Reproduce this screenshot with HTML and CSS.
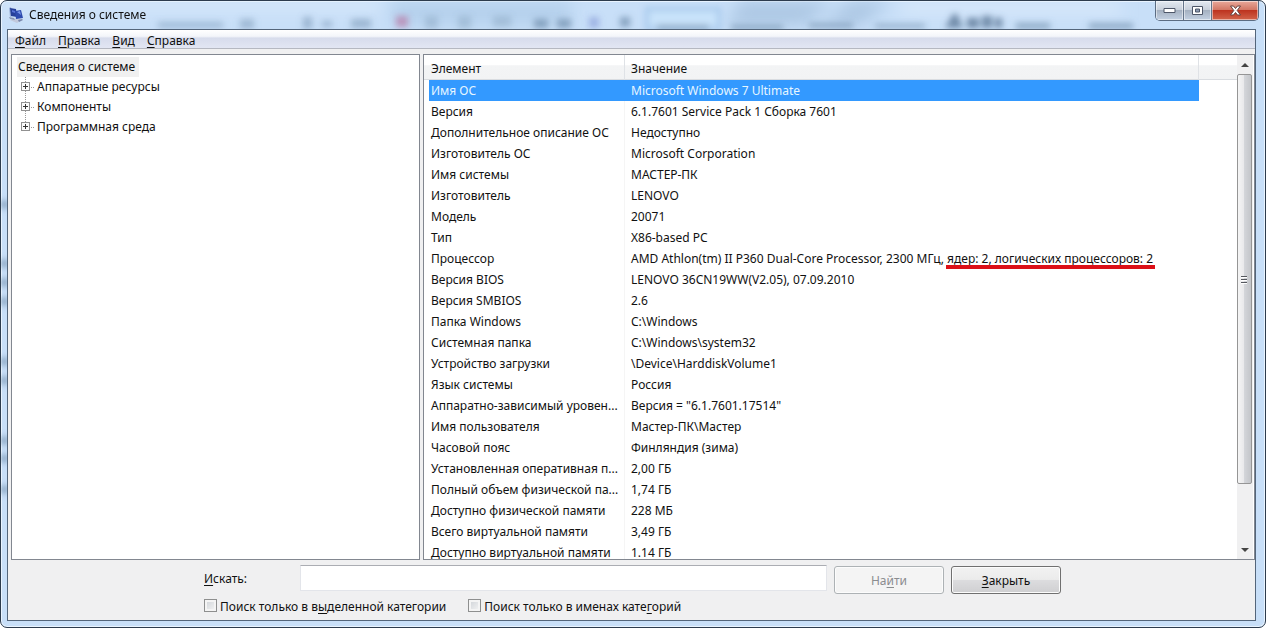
FILE: index.html
```html
<!DOCTYPE html>
<html lang="ru">
<head>
<meta charset="utf-8">
<title>Сведения о системе</title>
<link rel="stylesheet" href="styles.css">
</head>
<body>
<main class="window">
  <svg class="glass" width="100%" height="100%" aria-hidden="true">
    <defs>
      <filter id="soft" x="-20%" y="-100%" width="140%" height="300%"><feGaussianBlur stdDeviation="3"/></filter>
      <filter id="wide" x="-20%" y="-100%" width="140%" height="300%"><feGaussianBlur stdDeviation="8"/></filter>
    </defs>
    <g filter="url(#wide)">
      <path d="M390 0h180v24H390z" fill="#a9c6e4" opacity=".6"/>
      <path d="M740 0h90l-25 24h-80z M850 0h40l-30 24h-40z" fill="#98b4d4" opacity=".55"/>
      <path d="M0 0h380v8H0z M900 2h220v10H900z" fill="#dcebfb"/>
    </g>
    <g filter="url(#soft)" fill="#7895b3">
      <path d="M157 21h65v6h-65z M239 18h14v10h-14z" opacity=".5"/>
      <path d="M302 16h9v12h-9z M321 20h10v6h-10z M350 18h20v9h-20z" opacity=".55"/>
      <path d="M395 15h12v11h-12z" fill="#b86a9a" opacity=".6"/>
      <path d="M424 15h13v13h-13z M457 15h13v13h-13z M492 15h18v11h-18z" opacity=".35"/>
      <path d="M533 18h14v9h-14z M556 18h14v9h-14z M619 16h10v10h-10z" opacity=".8"/>
      <path d="M588 16h10v11h-10z" fill="#7589cf" opacity=".5"/>
      <path d="M646 8h72v20h-72z" fill="#c9e4fb" stroke="#9fc4ea" stroke-width="4" opacity=".8"/>
      <path d="M656 24h52v5h-52z M730 24h52v5h-52z M808 22h44v5h-44z M874 23h50v4h-50z M1015 22h34v6h-34z M1088 22h44v6h-44z" opacity=".75"/>
      <path d="M944 27l8-14h4l6 14z M966 17h12v10h-12z M981 15h10v12h-10z M994 17h7v10h-7z" fill="#607c9b" opacity=".85"/>
      <path d="M0 200h7v7H0z M0 259h7v7H0z M0 278h7v7H0z M0 297h7v7H0z M0 357h7v7H0z M0 376h7v7H0z M0 436h7v7H0z M0 454h7v7H0z M0 485h7v7H0z"/>
    </g>
  </svg>
  <header class="titlebar">
    <svg class="app-icon" width="16" height="16" viewBox="0 0 16 16" aria-hidden="true">
      <path d="M2 13l7-2 5 2-5 3z" fill="#c2c9dc"/>
      <path d="M1 1l2-1 1 9-2 1z" fill="#9bb1d8"/>
      <path d="M2 1l6 1 1 8-6-1z" fill="#253f99"/>
      <path d="M4 3l3 1v2L4 5z" fill="#5773d6"/>
      <path d="M7 4l6-1 2 8-7 1z" fill="#2d4aae"/>
      <path d="M9 5l3-1 1 4z" fill="#7896e8"/>
      <path d="M1 10l5 1 1 2-5-1z" fill="#8997b5"/>
      <path d="M10 13l4-1 1 1-4 2z" fill="#7886ab"/>
    </svg>
    <h1 class="title">Сведения о системе</h1>
    <div class="caption-buttons">
      <button class="caption" aria-label="Свернуть"><svg width="13" height="7" viewBox="0 0 13 7"><path d="M1 1.5h11v4H1z" fill="#fff" stroke="#4d5668"/></svg></button>
      <button class="caption" aria-label="Развернуть"><svg width="13" height="11" viewBox="0 0 13 11"><path d="M1.500 1.500h10v8h-10z" fill="#fff" stroke="#4d5668"/><path d="M4.500 4h4v3h-4z" fill="#8d9cb3" stroke="#4d5668"/></svg></button>
      <button class="caption close" aria-label="Закрыть окно"><svg width="13" height="11" viewBox="0 0 13 11"><path d="M1.500 1h3l2 2.500 2-2.500h3l-3.300 4.500 3.300 4.500h-3l-2-2.500-2 2.500h-3l3.300-4.500z" fill="#fff" stroke="#63413f"/></svg></button>
    </div>
  </header>
  <div class="client">
    <nav class="menubar">
      <button class="menu"><u>Ф</u>айл</button>
      <button class="menu"><u>П</u>равка</button>
      <button class="menu"><u>В</u>ид</button>
      <button class="menu"><u>С</u>правка</button>
    </nav>
    <div class="panes">
      <section class="pane tree-pane">
        <div class="tree-root">Сведения о системе</div>
        <ul class="tree">
          <li><button class="expander" aria-label="Развернуть: Аппаратные ресурсы"></button><span>Аппаратные ресурсы</span></li>
          <li><button class="expander" aria-label="Развернуть: Компоненты"></button><span>Компоненты</span></li>
          <li><button class="expander" aria-label="Развернуть: Программная среда"></button><span>Программная среда</span></li>
        </ul>
      </section>
      <section class="pane list-pane">
        <div class="list">
          <table class="details">
            <colgroup><col class="col-name"><col><col class="col-rest"></colgroup>
            <thead><tr><th>Элемент</th><th>Значение</th><td></td></tr></thead>
            <tbody>
              <tr class="selected"><td>Имя ОС</td><td>Microsoft Windows 7 Ultimate</td></tr>
              <tr><td>Версия</td><td>6.1.7601 Service Pack 1 Сборка 7601</td></tr>
              <tr><td>Дополнительное описание ОС</td><td>Недоступно</td></tr>
              <tr><td>Изготовитель ОС</td><td>Microsoft Corporation</td></tr>
              <tr><td>Имя системы</td><td>МАСТЕР-ПК</td></tr>
              <tr><td>Изготовитель</td><td>LENOVO</td></tr>
              <tr><td>Модель</td><td>20071</td></tr>
              <tr><td>Тип</td><td>X86-based PC</td></tr>
              <tr><td>Процессор</td><td>AMD Athlon(tm) II P360 Dual-Core Processor, 2300 МГц, <span class="marked">ядер: 2, логических процессоров: 2</span></td></tr>
              <tr><td>Версия BIOS</td><td>LENOVO 36CN19WW(V2.05), 07.09.2010</td></tr>
              <tr><td>Версия SMBIOS</td><td>2.6</td></tr>
              <tr><td>Папка Windows</td><td>C:\Windows</td></tr>
              <tr><td>Системная папка</td><td>C:\Windows\system32</td></tr>
              <tr><td>Устройство загрузки</td><td>\Device\HarddiskVolume1</td></tr>
              <tr><td>Язык системы</td><td>Россия</td></tr>
              <tr><td>Аппаратно-зависимый уровен...</td><td>Версия = "6.1.7601.17514"</td></tr>
              <tr><td>Имя пользователя</td><td>Мастер-ПК\Мастер</td></tr>
              <tr><td>Часовой пояс</td><td>Финляндия (зима)</td></tr>
              <tr><td>Установленная оперативная п...</td><td>2,00 ГБ</td></tr>
              <tr><td>Полный объем физической па...</td><td>1,74 ГБ</td></tr>
              <tr><td>Доступно физической памяти</td><td>228 МБ</td></tr>
              <tr><td>Всего виртуальной памяти</td><td>3,49 ГБ</td></tr>
              <tr><td>Доступно виртуальной памяти</td><td>1.14 ГБ</td></tr>
            </tbody>
          </table>
        </div>
        <div class="scrollbar">
          <button class="arrow" aria-label="Вверх"><svg width="8" height="4" viewBox="0 0 8 4"><path d="M0 4l4-4 4 4z" fill="#444"/></svg></button>
          <div class="track"><div class="thumb"><svg width="7" height="9" viewBox="0 0 7 9"><path d="M0 1.500h6M0 4.500h6M0 7.500h6" stroke="#55585e"/><path d="M0 2.500h6M0 5.500h6M0 8.500h6" stroke="#fff"/></svg></div></div>
          <button class="arrow" aria-label="Вниз"><svg width="8" height="4" viewBox="0 0 8 4"><path d="M0 0h8l-4 4z" fill="#444"/></svg></button>
        </div>
      </section>
    </div>
    <form class="search">
      <div class="search-row">
        <label class="search-label" for="query"><u>И</u>скать:</label>
        <input class="query" id="query" type="text">
        <button class="button" type="button" disabled>На<u>й</u>ти</button>
        <button class="button" type="button"><u>З</u>акрыть</button>
      </div>
      <div class="options">
        <label class="option"><input type="checkbox"><span>Поиск только в в<u>ы</u>деленной категории</span></label>
        <label class="option"><input type="checkbox"><span>Поиск только в именах кате<u>г</u>орий</span></label>
      </div>
    </form>
  </div>
</main>
</body>
</html>
```

FILE: styles.css
```css
* { box-sizing: border-box; }

body {
  margin: 0;
  background: #fff;
  color: #111;
  font: 12px/20px "Noto Sans", "Open Sans", sans-serif;
}

button, input { font: inherit; color: inherit; }
button { padding: 0; border: 0; background: none; }
u { text-underline-offset: 2px; text-decoration-skip-ink: none; }

.window {
  position: relative;
  display: flex;
  flex-direction: column;
  height: 100vh;
  padding: 1px 10px 6px 6px;
  overflow: hidden;
  border: 1px solid #2c3b4d;
  border-radius: 7px;
  background: #c8dff8;
  box-shadow: inset 0 0 0 1px #e9f4ff;
}

.glass { position: absolute; top: 0; left: 0; }

.titlebar {
  position: relative;
  display: flex;
  align-items: flex-start;
  height: 27px;
  flex: none;
}

.app-icon { margin: 5px 5px 0 1px; }

.title {
  flex: 1;
  margin: 3px 0 0;
  font-size: 12px;
  font-weight: 400;
  line-height: 20px;
}

.caption-buttons {
  display: flex;
  height: 20px;
  margin: -1px -4px 0 0;
  overflow: hidden;
  border: 1px solid #5b6c82;
  border-top: 0;
  border-radius: 0 0 5px 5px;
}

.caption {
  display: flex;
  align-items: center;
  justify-content: center;
  width: 28px;
  border-right: 1px solid #65758a;
  background: linear-gradient(#e3e9f1, #c9d1dc 45%, #a5b1c1 50%, #c3d1e2);
  box-shadow: inset 0 0 0 1px #ffffff80;
}

.caption.close {
  width: 46px;
  border-right: 0;
  background: linear-gradient(#e9a99b, #d37866 45%, #bd3420 50%, #d2644b);
}

.client {
  position: relative;
  display: flex;
  flex-direction: column;
  flex: 1;
  min-height: 0;
  margin-right: -1px;
  border: 1px solid #53657a;
  background: #f0f0f1;
}

.menubar {
  display: flex;
  gap: 12px;
  height: 19px;
  flex: none;
  padding-left: 7px;
  border-bottom: 1px solid #b5b8c1;
  background: linear-gradient(#fff, #f3f5fa 35%, #d7dcec 45%, #e2e6f3);
}

.menu { height: 20px; line-height: 20px; padding-top: 1px; }

.panes {
  display: flex;
  flex: 1;
  gap: 3px;
  min-height: 0;
  padding: 5px 0 0 3px;
}

.pane {
  border: 1px solid #828790;
  background: #fff;
  overflow: hidden;
}

.tree-pane { flex: 0 0 409px; padding: 2px 5px; }
.tree-root { width: max-content; padding: 0 4px 0 1px; background: #f0f0f0; }
.tree { margin: 0; padding: 0 0 0 4px; list-style: none; }

.tree li {
  display: flex;
  align-items: center;
  height: 20px;
  background: repeating-linear-gradient(#999 0 1px, #fff 1px 2px) 4px 0 / 1px 100% no-repeat;
}

.tree li:last-child { background-size: 1px 10px; }

.tree li::before {
  content: "";
  order: 1;
  width: 3px;
  margin: 0 3px 0 1px;
  border-top: 1px dotted #999;
}

.tree span { order: 2; }

.expander {
  width: 9px;
  height: 9px;
  margin-bottom: 1px;
  border: 1px solid #919191;
  background:
    linear-gradient(#333, #333) center / 5px 1px no-repeat,
    linear-gradient(#333, #333) center / 1px 5px no-repeat,
    #fafafa;
}

.list-pane { display: flex; flex: 1; min-width: 0; }
.list { flex: 1; min-width: 0; overflow: hidden; }

.details {
  width: 100%;
  border-collapse: separate;
  border-spacing: 0;
  table-layout: fixed;
}

.col-name { width: 201px; }
.col-rest { width: 38px; }

.details th, .details td {
  height: 21px;
  padding: 1px 0 0 7px;
  overflow: hidden;
  font-weight: 400;
  line-height: 20px;
  text-align: left;
  white-space: nowrap;
}

.details td + td, .details th + th { padding-left: 6px; }

.details thead th, .details thead td {
  height: 25px;
  padding-top: 4px;
  border-bottom: 1px solid #d9dce0;
  background: linear-gradient(#fff 40%, #f3f4f5 45%, #f2f3f4);
}

.details thead th { border-right: 1px solid #dfe2e6; }
.details tbody td:first-child { border-right: 1px solid #f5f5f5; }

.details .selected td { background: #39f; color: #e6f6ff; }
.details .selected td:first-child {
  border-color: #39f;
  background: linear-gradient(to right, #fff 5px, #39f 5px);
}

.marked { position: relative; }

.marked::after {
  content: "";
  position: absolute;
  right: -2px;
  bottom: -2px;
  left: -1px;
  height: 4px;
  background: #dc1018;
}

.scrollbar {
  display: flex;
  flex-direction: column;
  width: 16px;
  margin: 0 1px 0 0;
  background: #f0f0f1;
}

.arrow {
  display: flex;
  flex: 0 0 19px;
  align-items: center;
  justify-content: center;
}

.track { flex: 1; }

.thumb {
  display: flex;
  align-items: center;
  justify-content: center;
  width: 15px;
  height: 88%;
  border: 1px solid #959595;
  border-radius: 2px;
  background: linear-gradient(to right, #f5f5f5, #e9e9eb 45%, #d3d5d9 50%, #c3c5c9);
}

.search {
  flex: none;
  width: 100%;
  max-width: 859px;
  height: 60px;
  margin: 0 auto;
  padding: 5px 0 0 2px;
}

.search-row { display: flex; gap: 7px; }
.search-label { width: 89px; line-height: 28px; }

.query {
  flex: 1;
  min-width: 0;
  height: 26px;
  padding: 0 4px;
  border: 1px solid #e3e5ea;
  border-top-color: #abadb3;
  background: #fff;
}

.button {
  width: 110px;
  height: 28px;
  margin-top: 1px;
  padding-top: 1px;
  border: 1px solid #707070;
  border-radius: 3px;
  background: linear-gradient(#f2f2f2, #ebebeb 48%, #dcdcde 52%, #cfcfd1);
  box-shadow: inset 0 0 0 1px #fcfcfc;
}

.button:disabled {
  border-color: #adb2b5;
  background: #f4f4f4;
  color: #8b8d90;
}

.options { display: flex; gap: 22px; margin-top: 2px; }
.option { display: flex; gap: 3px; padding-top: 1px; }

.option input {
  appearance: none;
  width: 13px;
  height: 13px;
  margin: 2px 0 0;
  border: 1px solid #8e8f8f;
  background: linear-gradient(135deg, #cdd1d6, #f6f6f6);
  box-shadow: inset 0 0 0 2px #f4f4f4;
}
```
